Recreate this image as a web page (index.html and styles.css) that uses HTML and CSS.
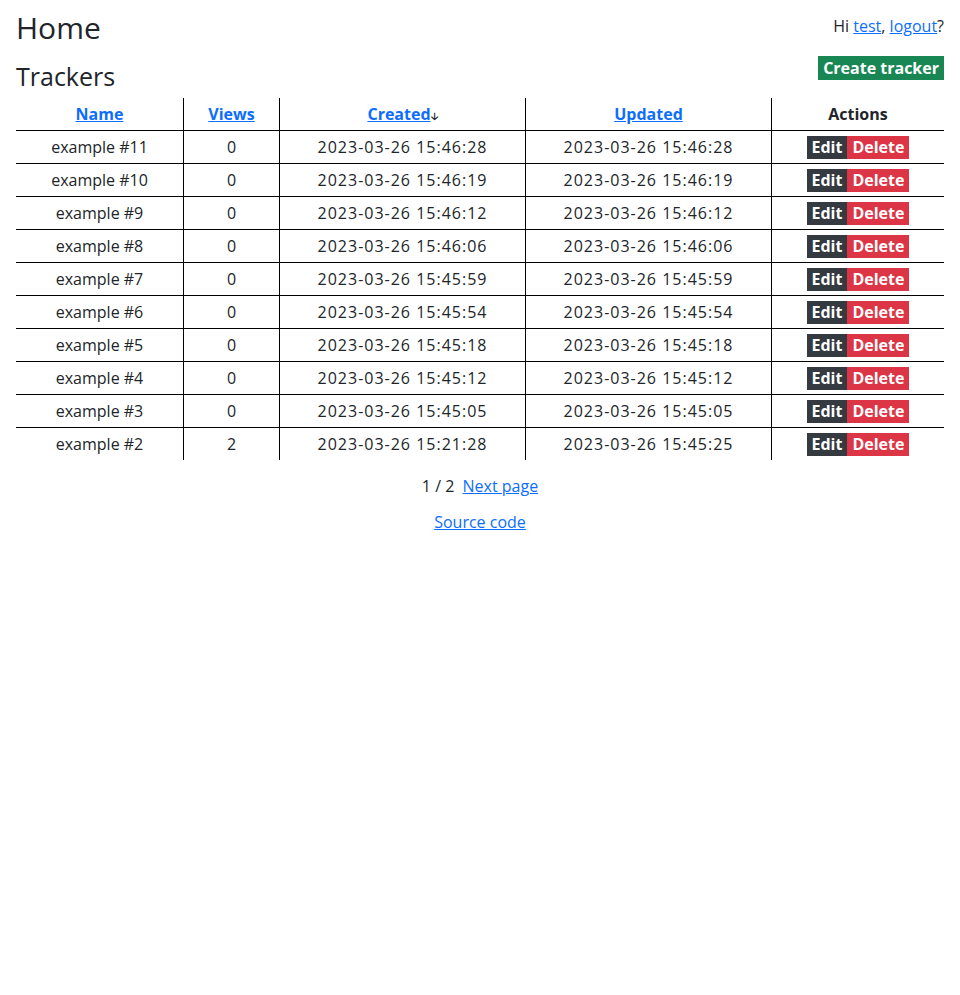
FILE: index.html
```html
<!DOCTYPE html>
<html lang="en">
<head>
<meta charset="utf-8">
<title>Home</title>
<link rel="stylesheet" href="styles.css">
</head>
<body>
<div class="page">
  <header class="top">
    <h1 class="title">Home</h1>
    <div class="greeting">Hi <a href="#">test</a>, <a href="#">logout</a>?</div>
  </header>
  <section class="trackers">
    <div class="section-head">
      <h2 class="subtitle">Trackers</h2>
      <a class="btn btn-green" href="#">Create tracker</a>
    </div>
    <table class="grid">
      <thead>
        <tr>
          <th class="c-name"><a href="#">Name</a></th>
          <th class="c-views"><a href="#">Views</a></th>
          <th class="c-date"><a href="#">Created</a><span class="arrow">&#x1F863;</span></th>
          <th class="c-date"><a href="#">Updated</a></th>
          <th class="c-actions">Actions</th>
        </tr>
      </thead>
      <tbody>
        <tr><td>example #11</td><td>0</td><td class="d">2023-03-26 15:46:28</td><td class="d">2023-03-26 15:46:28</td><td><span class="btns"><a class="btn btn-dark" href="#">Edit</a><a class="btn btn-red" href="#">Delete</a></span></td></tr>
        <tr><td>example #10</td><td>0</td><td class="d">2023-03-26 15:46:19</td><td class="d">2023-03-26 15:46:19</td><td><span class="btns"><a class="btn btn-dark" href="#">Edit</a><a class="btn btn-red" href="#">Delete</a></span></td></tr>
        <tr><td>example #9</td><td>0</td><td class="d">2023-03-26 15:46:12</td><td class="d">2023-03-26 15:46:12</td><td><span class="btns"><a class="btn btn-dark" href="#">Edit</a><a class="btn btn-red" href="#">Delete</a></span></td></tr>
        <tr><td>example #8</td><td>0</td><td class="d">2023-03-26 15:46:06</td><td class="d">2023-03-26 15:46:06</td><td><span class="btns"><a class="btn btn-dark" href="#">Edit</a><a class="btn btn-red" href="#">Delete</a></span></td></tr>
        <tr><td>example #7</td><td>0</td><td class="d">2023-03-26 15:45:59</td><td class="d">2023-03-26 15:45:59</td><td><span class="btns"><a class="btn btn-dark" href="#">Edit</a><a class="btn btn-red" href="#">Delete</a></span></td></tr>
        <tr><td>example #6</td><td>0</td><td class="d">2023-03-26 15:45:54</td><td class="d">2023-03-26 15:45:54</td><td><span class="btns"><a class="btn btn-dark" href="#">Edit</a><a class="btn btn-red" href="#">Delete</a></span></td></tr>
        <tr><td>example #5</td><td>0</td><td class="d">2023-03-26 15:45:18</td><td class="d">2023-03-26 15:45:18</td><td><span class="btns"><a class="btn btn-dark" href="#">Edit</a><a class="btn btn-red" href="#">Delete</a></span></td></tr>
        <tr><td>example #4</td><td>0</td><td class="d">2023-03-26 15:45:12</td><td class="d">2023-03-26 15:45:12</td><td><span class="btns"><a class="btn btn-dark" href="#">Edit</a><a class="btn btn-red" href="#">Delete</a></span></td></tr>
        <tr><td>example #3</td><td>0</td><td class="d">2023-03-26 15:45:05</td><td class="d">2023-03-26 15:45:05</td><td><span class="btns"><a class="btn btn-dark" href="#">Edit</a><a class="btn btn-red" href="#">Delete</a></span></td></tr>
        <tr><td>example #2</td><td>2</td><td class="d">2023-03-26 15:21:28</td><td class="d">2023-03-26 15:45:25</td><td><span class="btns"><a class="btn btn-dark" href="#">Edit</a><a class="btn btn-red" href="#">Delete</a></span></td></tr>
      </tbody>
    </table>
    <div class="pager">1 / 2 <a href="#">Next page</a></div>
  </section>
  <footer class="foot"><a href="#">Source code</a></footer>
</div>
</body>
</html>
```

FILE: styles.css
```css
html, body {
  margin: 0;
  padding: 0;
  background: #fff;
}
body {
  font-family: "Open Sans", "Liberation Sans", sans-serif;
  font-size: 16px;
  color: #212529;
}
a {
  color: #0d6efd;
}
.page {
  padding: 0 16px;
}
.top {
  display: flex;
  justify-content: space-between;
  align-items: flex-start;
  padding-top: 8px;
}
.title {
  margin: 0;
  font-size: 30px;
  font-weight: 400;
  line-height: 40px;
}
.greeting {
  padding-top: 6px;
  line-height: 24px;
}
.section-head {
  display: flex;
  justify-content: space-between;
  align-items: flex-start;
  margin-top: 8px;
}
.subtitle {
  margin: 0;
  font-size: 25px;
  font-weight: 400;
  line-height: 40px;
}
.btn {
  display: inline-block;
  color: #fff;
  text-decoration: none;
  font-weight: 700;
  line-height: 23px;
  padding: 0 5px;
}
.section-head .btn {
  line-height: 24px;
  padding: 0 5px;
}
.btn-green { background: #198754; }
.btn-dark { background: #343a40; }
.btn-red { background: #dc3545; }
.btns {
  display: inline-flex;
  vertical-align: middle;
}
.grid {
  width: 100%;
  border-collapse: collapse;
  margin-top: 2px;
}
.grid th, .grid td {
  text-align: center;
  padding: 0;
  height: 32px;
  border-left: 1px solid #000;
  border-top: 1px solid #000;
}
.grid th {
  border-top: none;
  font-weight: 700;
}
.grid th:first-child, .grid td:first-child {
  border-left: none;
}
.c-name { width: 167px; }
.c-views { width: 95px; }
.c-date { width: 245px; }
.arrow {
  font-size: 10px;
  font-weight: 700;
}
.d {
  letter-spacing: 1px;
}
.pager {
  text-align: center;
  margin-top: 14px;
  line-height: 24px;
}
.pager a {
  margin-left: 4px;
}
.foot {
  text-align: center;
  margin-top: 12px;
  line-height: 24px;
}
```
